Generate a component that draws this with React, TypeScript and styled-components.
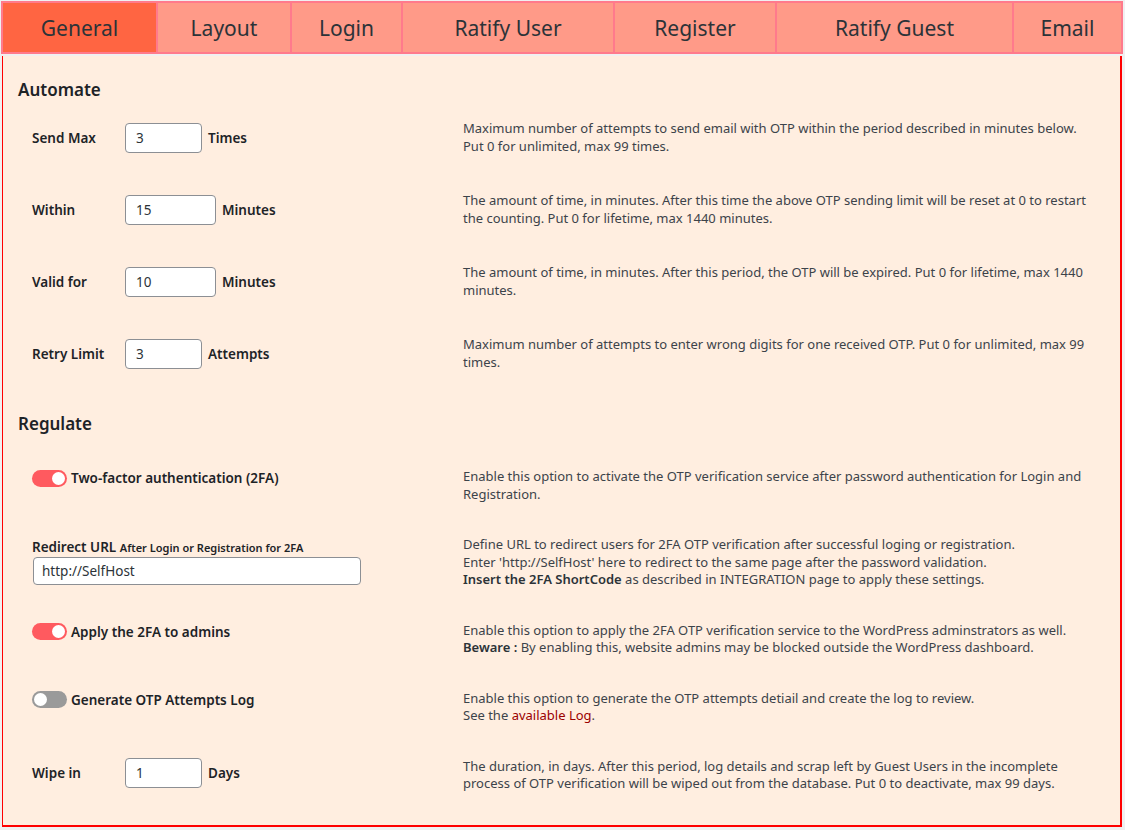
import styled, { createGlobalStyle } from 'styled-components';

const GlobalStyle = createGlobalStyle`
  html, body {
    margin: 0;
    padding: 0;
    background: #f0f0f1;
  }

  body {
    font-family: 'Segoe UI', 'Noto Sans', Roboto, sans-serif;
    color: #1d2327;
  }

  * {
    box-sizing: border-box;
  }
`;

const Page = styled.div`
  width: 1123px;
  padding: 1px 0 2px 1px;
`;

const TabBar = styled.nav`
  display: flex;
  gap: 2px;
  border: 2px solid #ff7a8c;
  background: #ff7a8c;
  margin-bottom: 2px;
`;

const Tab = styled.div<{ $w?: number; $active?: boolean }>`
  flex: ${(p) => (p.$w ? `0 0 ${p.$w}px` : '1 1 auto')};
  height: 49px;
  display: flex;
  align-items: center;
  justify-content: center;
  padding-top: 1px;
  font-size: 21px;
  color: #2c3338;
  background: ${(p) => (p.$active ? '#ff6542' : '#ff9a88')};
  cursor: pointer;
`;

const Panel = styled.div`
  display: flow-root;
  margin-left: 1px;
  width: 1120px;
  background: #ffeee0;
  border-left: 1px solid #f00;
  border-right: 2px solid #f00;
  border-bottom: 2px solid #f00;
  padding: 0 0 15px 15px;
`;

const SectionTitle = styled.h2<{ $mb: number }>`
  margin: 22px 0 ${(p) => p.$mb}px;
  font-size: 17px;
  line-height: 24px;
  font-weight: 600;
  color: #1d2327;
`;

const Row = styled.div<{ $tight?: boolean }>`
  display: grid;
  grid-template-columns: 431px 1fr;
  align-items: ${(p) => (p.$tight ? 'start' : 'center')};
  padding: ${(p) => (p.$tight ? '16px 0 17px' : '18px 0 19px')};
  padding-left: 14px;
`;

const Field = styled.div`
  display: flex;
  align-items: center;
`;

const FieldLabel = styled.label`
  width: 93px;
  font-size: 13.5px;
  font-weight: 600;
`;

const NumberInput = styled.input<{ $w: number }>`
  width: ${(p) => p.$w}px;
  height: 30px;
  padding: 0 10px;
  border: 1px solid #8c8f94;
  border-radius: 4px;
  background: #fff;
  font: inherit;
  font-size: 13.5px;
  color: #2c3338;
`;

const Unit = styled.span`
  margin-left: 6px;
  font-size: 13.5px;
  font-weight: 600;
`;

const Desc = styled.p`
  margin: 0;
  font-size: 13px;
  line-height: 17.5px;
  color: #3c434a;
  white-space: nowrap;

  b {
    font-weight: 600;
    color: #2c3338;
  }

  a {
    color: #9b0000;
    text-decoration: none;
  }
`;

const ToggleWrap = styled.label`
  display: flex;
  align-items: center;
  height: 20px;
  font-size: 13.5px;
  font-weight: 600;
`;

const Track = styled.span<{ $on?: boolean }>`
  position: relative;
  width: 35px;
  height: 17px;
  border-radius: 9px;
  margin-right: 4px;
  background: ${(p) => (p.$on ? '#ff5a5f' : '#9a9a9a')};

  &::after {
    content: '';
    position: absolute;
    top: 2px;
    left: ${(p) => (p.$on ? '20px' : '2px')};
    width: 13px;
    height: 13px;
    border-radius: 50%;
    background: #fff;
  }
`;

const UrlField = styled.div`
  display: flex;
  flex-direction: column;
  padding-top: 2px;
`;

const UrlLabel = styled.label`
  font-size: 13.5px;
  line-height: 18px;
  font-weight: 600;

  small {
    font-size: 11px;
    font-weight: 600;
  }
`;

const UrlInput = styled.input`
  width: 328px;
  height: 28px;
  margin-left: 1px;
  padding: 0 8px;
  border: 1px solid #8c8f94;
  border-radius: 4px;
  background: #fff;
  font: inherit;
  font-size: 13.5px;
  color: #2c3338;
`;

const tabs = [
  { label: 'General', w: 153 },
  { label: 'Layout', w: 132 },
  { label: 'Login', w: 109 },
  { label: 'Ratify User', w: 210 },
  { label: 'Register', w: 160 },
  { label: 'Ratify Guest', w: 235 },
  { label: 'Email' },
];

const automate = [
  {
    label: 'Send Max',
    value: '3',
    w: 77,
    unit: 'Times',
    desc: [
      'Maximum number of attempts to send email with OTP within the period described in minutes below.',
      'Put 0 for unlimited, max 99 times.',
    ],
  },
  {
    label: 'Within',
    value: '15',
    w: 91,
    unit: 'Minutes',
    desc: [
      'The amount of time, in minutes. After this time the above OTP sending limit will be reset at 0 to restart',
      'the counting. Put 0 for lifetime, max 1440 minutes.',
    ],
  },
  {
    label: 'Valid for',
    value: '10',
    w: 91,
    unit: 'Minutes',
    desc: [
      'The amount of time, in minutes. After this period, the OTP will be expired. Put 0 for lifetime, max 1440',
      'minutes.',
    ],
  },
  {
    label: 'Retry Limit',
    value: '3',
    w: 77,
    unit: 'Attempts',
    desc: [
      'Maximum number of attempts to enter wrong digits for one received OTP. Put 0 for unlimited, max 99',
      'times.',
    ],
  },
];

const Lines = ({ lines }: { lines: string[] }) => (
  <Desc>
    {lines.map((l, i) => (
      <span key={i}>
        {l}
        {i < lines.length - 1 && <br />}
      </span>
    ))}
  </Desc>
);

export default function App() {
  return (
    <>
      <GlobalStyle />
      <Page>
        <TabBar>
          {tabs.map((t, i) => (
            <Tab key={t.label} $w={t.w} $active={i === 0}>
              {t.label}
            </Tab>
          ))}
        </TabBar>

        <Panel>
          <SectionTitle $mb={0}>Automate</SectionTitle>
          {automate.map((r) => (
            <Row key={r.label}>
              <Field>
                <FieldLabel>{r.label}</FieldLabel>
                <NumberInput $w={r.w} defaultValue={r.value} />
                <Unit>{r.unit}</Unit>
              </Field>
              <Lines lines={r.desc} />
            </Row>
          ))}

          <SectionTitle $mb={16}>Regulate</SectionTitle>

          <Row $tight>
            <ToggleWrap>
              <Track $on />
              Two-factor authentication (2FA)
            </ToggleWrap>
            <Lines
              lines={[
                'Enable this option to activate the OTP verification service after password authentication for Login and',
                'Registration.',
              ]}
            />
          </Row>

          <Row $tight>
            <UrlField>
              <UrlLabel>
                Redirect URL <small>After Login or Registration for 2FA</small>
              </UrlLabel>
              <UrlInput defaultValue="http://SelfHost" />
            </UrlField>
            <Desc>
              Define URL to redirect users for 2FA OTP verification after successful loging or registration.
              <br />
              Enter 'http://SelfHost' here to redirect to the same page after the password validation.
              <br />
              <b>Insert the 2FA ShortCode</b> as described in INTEGRATION page to apply these settings.
            </Desc>
          </Row>

          <Row $tight>
            <ToggleWrap>
              <Track $on />
              Apply the 2FA to admins
            </ToggleWrap>
            <Desc>
              Enable this option to apply the 2FA OTP verification service to the WordPress adminstrators as well.
              <br />
              <b>Beware :</b> By enabling this, website admins may be blocked outside the WordPress dashboard.
            </Desc>
          </Row>

          <Row $tight>
            <ToggleWrap>
              <Track />
              Generate OTP Attempts Log
            </ToggleWrap>
            <Desc>
              Enable this option to generate the OTP attempts detiail and create the log to review.
              <br />
              See the <a href="#">available Log</a>.
            </Desc>
          </Row>

          <Row $tight>
            <Field>
              <FieldLabel>Wipe in</FieldLabel>
              <NumberInput $w={77} defaultValue="1" />
              <Unit>Days</Unit>
            </Field>
            <Lines
              lines={[
                'The duration, in days. After this period, log details and scrap left by Guest Users in the incomplete',
                'process of OTP verification will be wiped out from the database. Put 0 to deactivate, max 99 days.',
              ]}
            />
          </Row>
        </Panel>
      </Page>
    </>
  );
}
